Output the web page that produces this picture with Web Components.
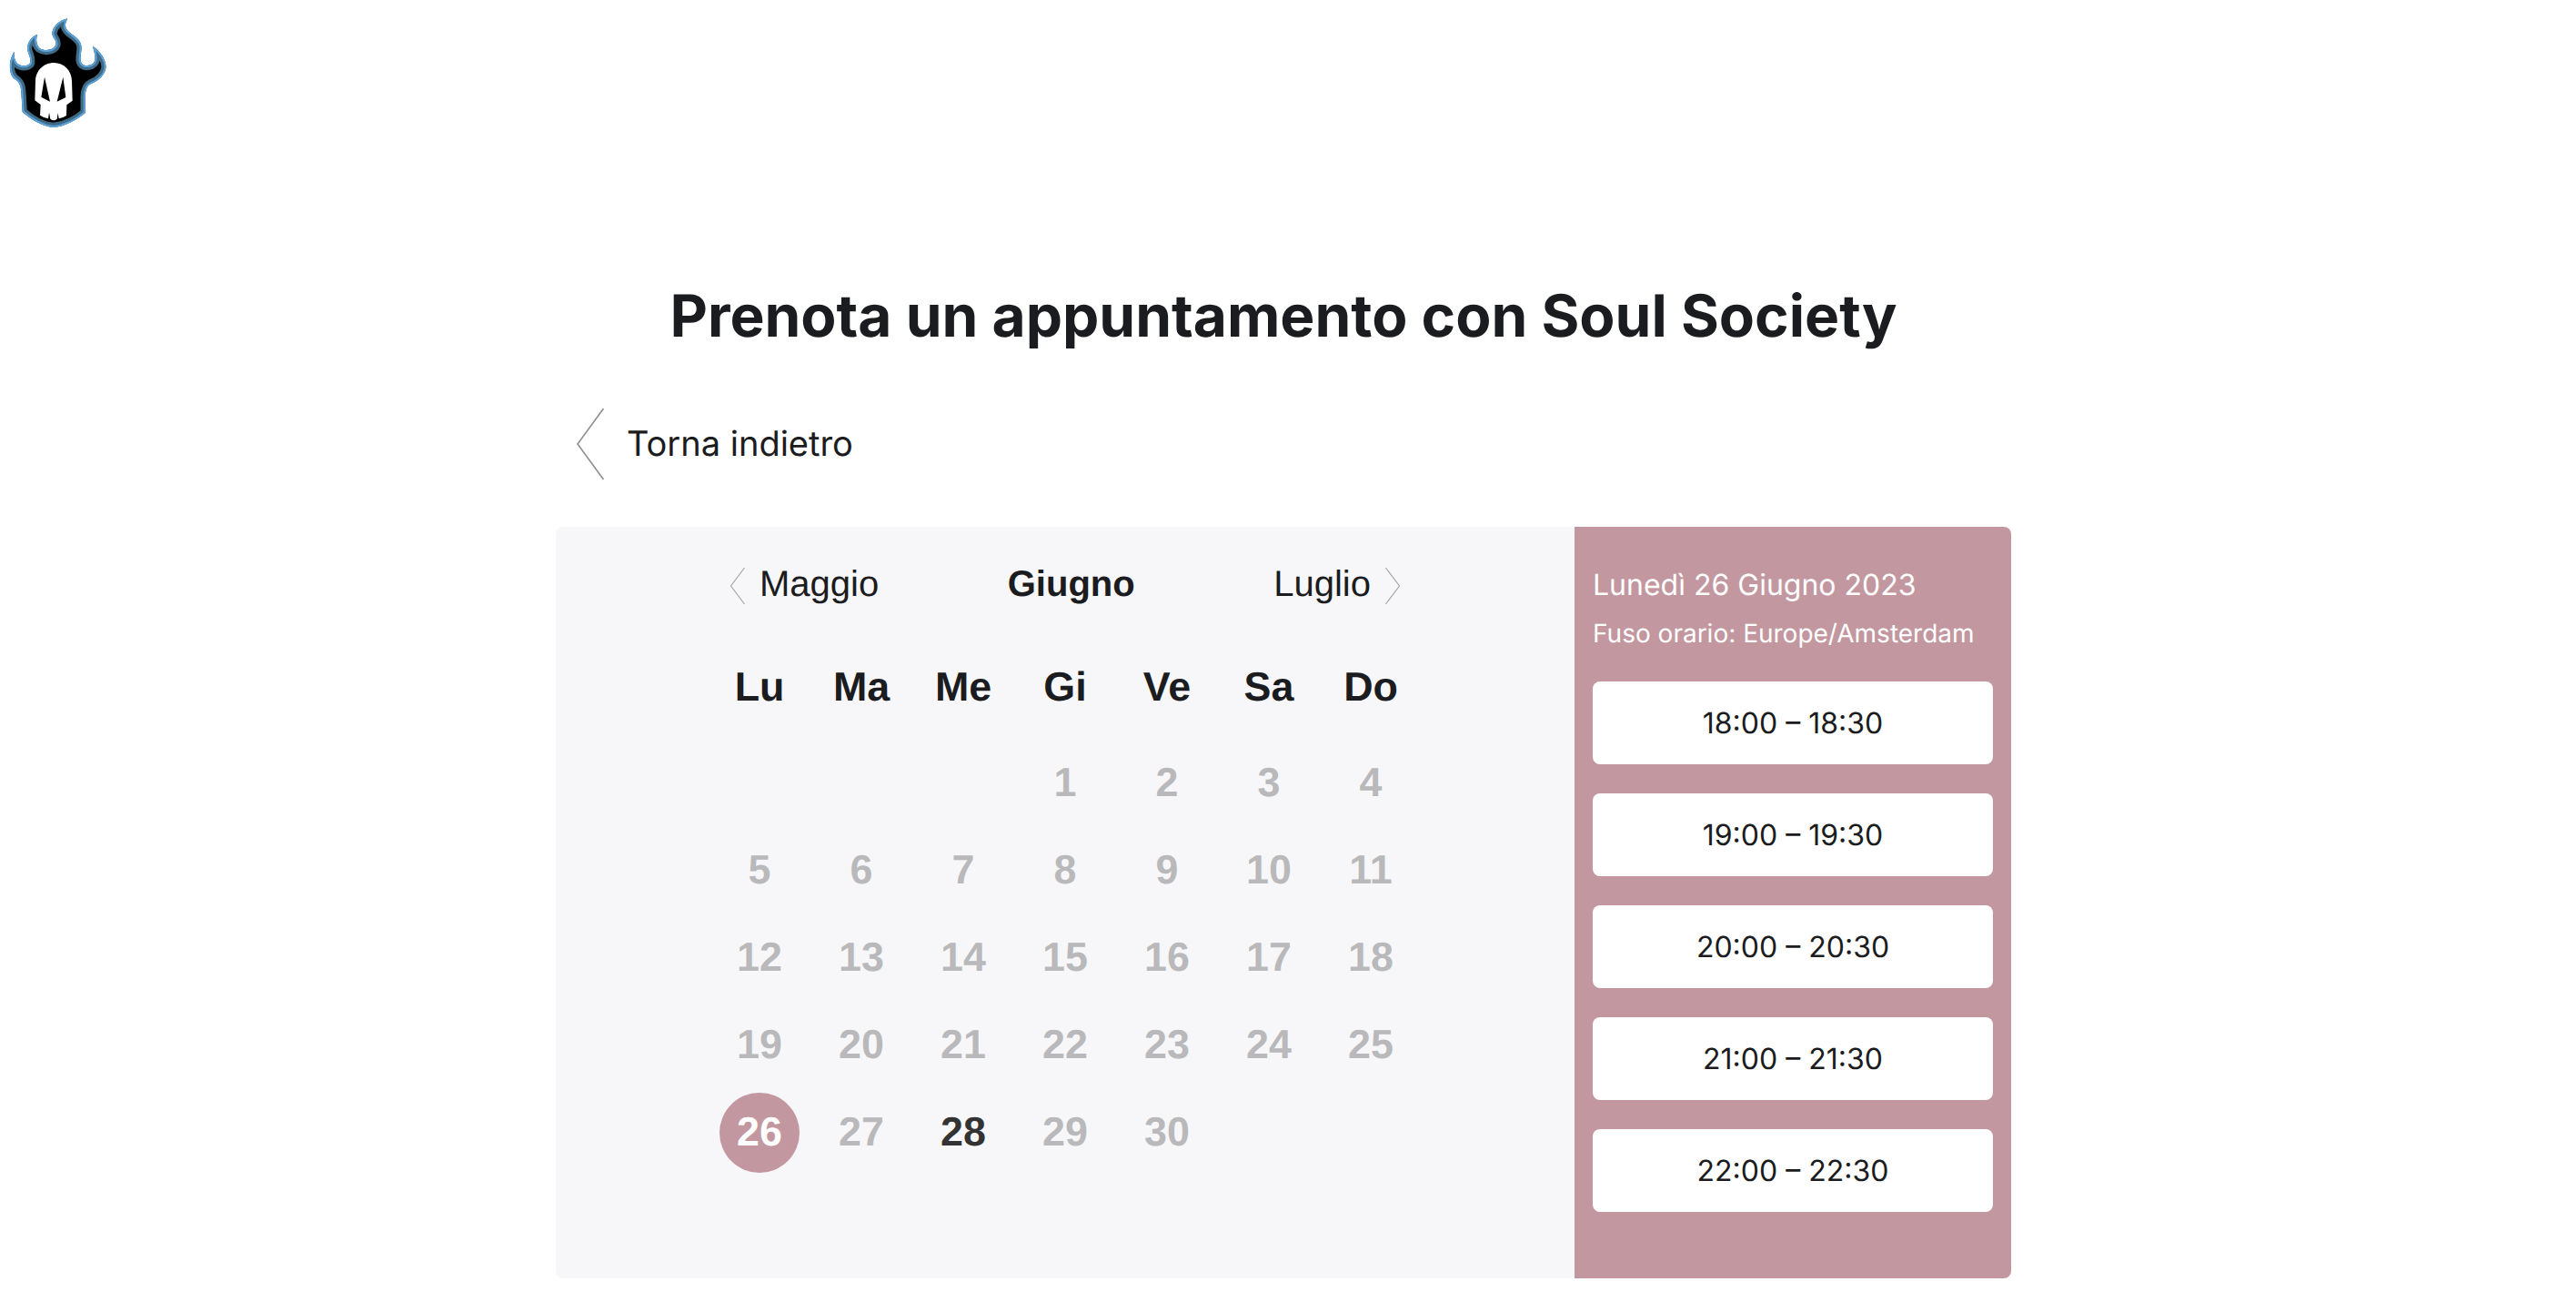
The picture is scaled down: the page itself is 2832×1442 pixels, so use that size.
<!DOCTYPE html>
<html lang="it">
<head>
<meta charset="utf-8">
<title>Prenota un appuntamento</title>
<style>
  body {
    margin: 0;
    background: #fff;
    color: #1b1c20;
    font-family: Inter, sans-serif;
    text-rendering: geometricPrecision;
    --accent: #c297a0;
    --panel: #f7f7fa;
  }
</style>
</head>
<body>
<booking-page>
  <flame-logo slot="logo"></flame-logo>
  <span slot="title">Prenota un appuntamento con Soul Society</span>
  <back-link slot="back">Torna indietro</back-link>
  <month-calendar prev="Maggio" month="Giugno" next="Luglio" offset="3" days="30" selected="26" available="28"></month-calendar>
  <slot-list>
    <span slot="date">Lunedì 26 Giugno 2023</span>
    <span slot="zone">Fuso orario: Europe/Amsterdam</span>
    <time-slot>18:00 – 18:30</time-slot>
    <time-slot>19:00 – 19:30</time-slot>
    <time-slot>20:00 – 20:30</time-slot>
    <time-slot>21:00 – 21:30</time-slot>
    <time-slot>22:00 – 22:30</time-slot>
  </slot-list>
</booking-page>

<script>
// attach an open shadow root with the given markup
function render(el, html) {
  el.attachShadow({ mode: 'open' }).innerHTML = html
}

class BookingPage extends HTMLElement {
  constructor() {
    super();
    render(this, `
<style>
  :host { display: block; }
  header { height: 140px; padding-top: 10px; }
  main { width: 1600px; margin: 158px auto 0; padding-right: 10px; }
  h1 { margin: 0; font-size: 64px; font-weight: 700; line-height: 80px; text-align: center; white-space: nowrap; }
  nav { margin: 60px 0 51px; display: flex; }
  .card { display: flex; height: 826px; border-radius: 8px; overflow: hidden; }
</style>
<header><slot name="logo"></slot></header>
<main>
  <h1><slot name="title"></slot></h1>
  <nav><slot name="back"></slot></nav>
  <div class="card"><slot></slot></div>
</main>`)
  }
}

class FlameLogo extends HTMLElement {
  constructor() {
    super();
    render(this, `
<style>
  :host { display: block; width: 130px; height: 140px; }
  svg { display: block; }
</style>
<svg width="130" height="140" viewBox="0 0 390 420">
  <defs>
    <path id="flame" d="M223 31C195 36 174 58 172 80C172 94 188 102 184 118C176 136 148 140 131 129C120 118 118 100 123 83C104 91 90 109 90 130C91 147 105 162 98 180C86 190 64 190 53 174C47 163 46 152 47 140C36 158 30 178 33 200C36 218 42 227 52 233C68 244 70 262 71 290L74 339C104 366 142 388 178 390C214 387 253 366 281 343L281 290C282 264 288 252 300 247C326 236 348 216 350 190C348 163 330 139 306 122C312 148 322 172 301 183C284 190 268 185 266 170C264 152 271 136 268 120C265 101 247 90 231 78C212 64 213 49 223 31Z"/>
    <clipPath id="edge"><use href="#flame"/></clipPath>
  </defs>
  <g clip-path="url(#edge)">
    <use href="#flame" fill="#000" stroke="#3f6b87" stroke-width="31"/>
    <use href="#flame" fill="none" stroke="#5ba3d9" stroke-width="12"/>
  </g>
  <path fill="#fff" d="M178 177C144 177 118 203 117 236L115 301L134 315L132 350Q145 359 159 361L162 341L166 362Q177 371 188 362L191 343L194 361Q208 359 219 351L220 316L239 302L237 236C236 203 211 177 178 177Z"/>
  <path fill="#000" d="M147 224L165 305L136 290ZM208 224L217 291L188 305Z"/>
</svg>`)
  }
}

class BackLink extends HTMLElement {
  constructor() {
    super();
    render(this, `
<style>
  :host { display: flex; align-items: center; height: 80px; padding-left: 22px; font-size: 38px; cursor: pointer; }
  svg { margin-right: 24px; }
</style>
<svg width="32" height="80" fill="none" stroke="#8f8f91" stroke-width="1.6"><path d="M30.5 1L2 40L30.5 79"/></svg>
<slot></slot>`)
  }
}

class MonthCalendar extends HTMLElement {
  constructor() {
    super();
    const get = name => this.getAttribute(name)
    let cells = ''
    for (let d = 1; d <= Number(get('days')); d++) {
      let cls = ''
      if (String(d) === get('selected')) cls = 'selected'
      if (String(d) === get('available')) cls = 'available'
      // first day starts after the empty cells of the week
      const start = d === 1 ? ` style="grid-column-start:${Number(get('offset')) + 1}"` : ''
      cells += `<span class="${cls}"${start}>${d}</span>`
    }
    const names = ['Lu', 'Ma', 'Me', 'Gi', 'Ve', 'Sa', 'Do'].map(n => `<b>${n}</b>`).join('')

    render(this, `
<style>
  :host {
    display: flex; flex-direction: column; align-items: center;
    box-sizing: border-box; width: 1120px; padding-top: 7px;
    background: var(--panel); font-family: "Liberation Sans", Arial, sans-serif;
  }
  .months { display: flex; align-items: center; justify-content: space-between; box-sizing: border-box; width: 784px; height: 112px; padding: 0 23px; font-size: 40px; }
  .months div { display: flex; align-items: center; gap: 16px; }
  strong { margin-right: 11px; }
  svg { margin-top: 3px; }
  .grid { display: grid; grid-template-columns: repeat(7, 112px); grid-template-rows: 115px repeat(5, 96px); place-items: center; font-size: 44.8px; font-weight: 700; }
  span { display: flex; align-items: center; justify-content: center; box-sizing: border-box; width: 88px; height: 88px; padding-bottom: 2px; border-radius: 50%; color: #b9b9bb; }
  .available { color: #333; }
  .selected { background: var(--accent); color: #fff; }
</style>
<div class="months">
  <div>
    <svg width="17" height="42" fill="none" stroke="#a5a5a8" stroke-width="1.2"><path d="M16.5 1L1.5 21L16.5 41"/></svg>
    ${get('prev')}
  </div>
  <strong>${get('month')}</strong>
  <div>
    ${get('next')}
    <svg width="17" height="42" fill="none" stroke="#a5a5a8" stroke-width="1.2"><path d="M.5 1L15.5 21L.5 41"/></svg>
  </div>
</div>
<div class="grid">${names}${cells}</div>`)
  }
}

class SlotList extends HTMLElement {
  constructor() {
    super();
    render(this, `
<style>
  :host { display: block; box-sizing: border-box; width: 480px; padding: 40px 20px 0; background: var(--accent); color: #fff; }
  p { margin: 0; white-space: nowrap; }
  .date { font-size: 32px; line-height: 48px; }
  .zone { margin-top: 8px; font-size: 28px; line-height: 42px; }
  .list { display: flex; flex-direction: column; gap: 32px; margin-top: 32px; }
</style>
<p class="date"><slot name="date"></slot></p>
<p class="zone"><slot name="zone"></slot></p>
<div class="list"><slot></slot></div>`)
  }
}

class TimeSlot extends HTMLElement {
  constructor() {
    super();
    render(this, `
<style>
  :host { display: flex; align-items: center; justify-content: center; height: 91px; border-radius: 8px; background: #fff; color: #1b1c20; font-size: 32px; cursor: pointer; }
</style>
<slot></slot>`)
  }
}

window.customElements.define('booking-page', BookingPage)
window.customElements.define('flame-logo', FlameLogo)
window.customElements.define('back-link', BackLink)
window.customElements.define('month-calendar', MonthCalendar)
window.customElements.define('slot-list', SlotList)
window.customElements.define('time-slot', TimeSlot)
</script>
</body>
</html>
